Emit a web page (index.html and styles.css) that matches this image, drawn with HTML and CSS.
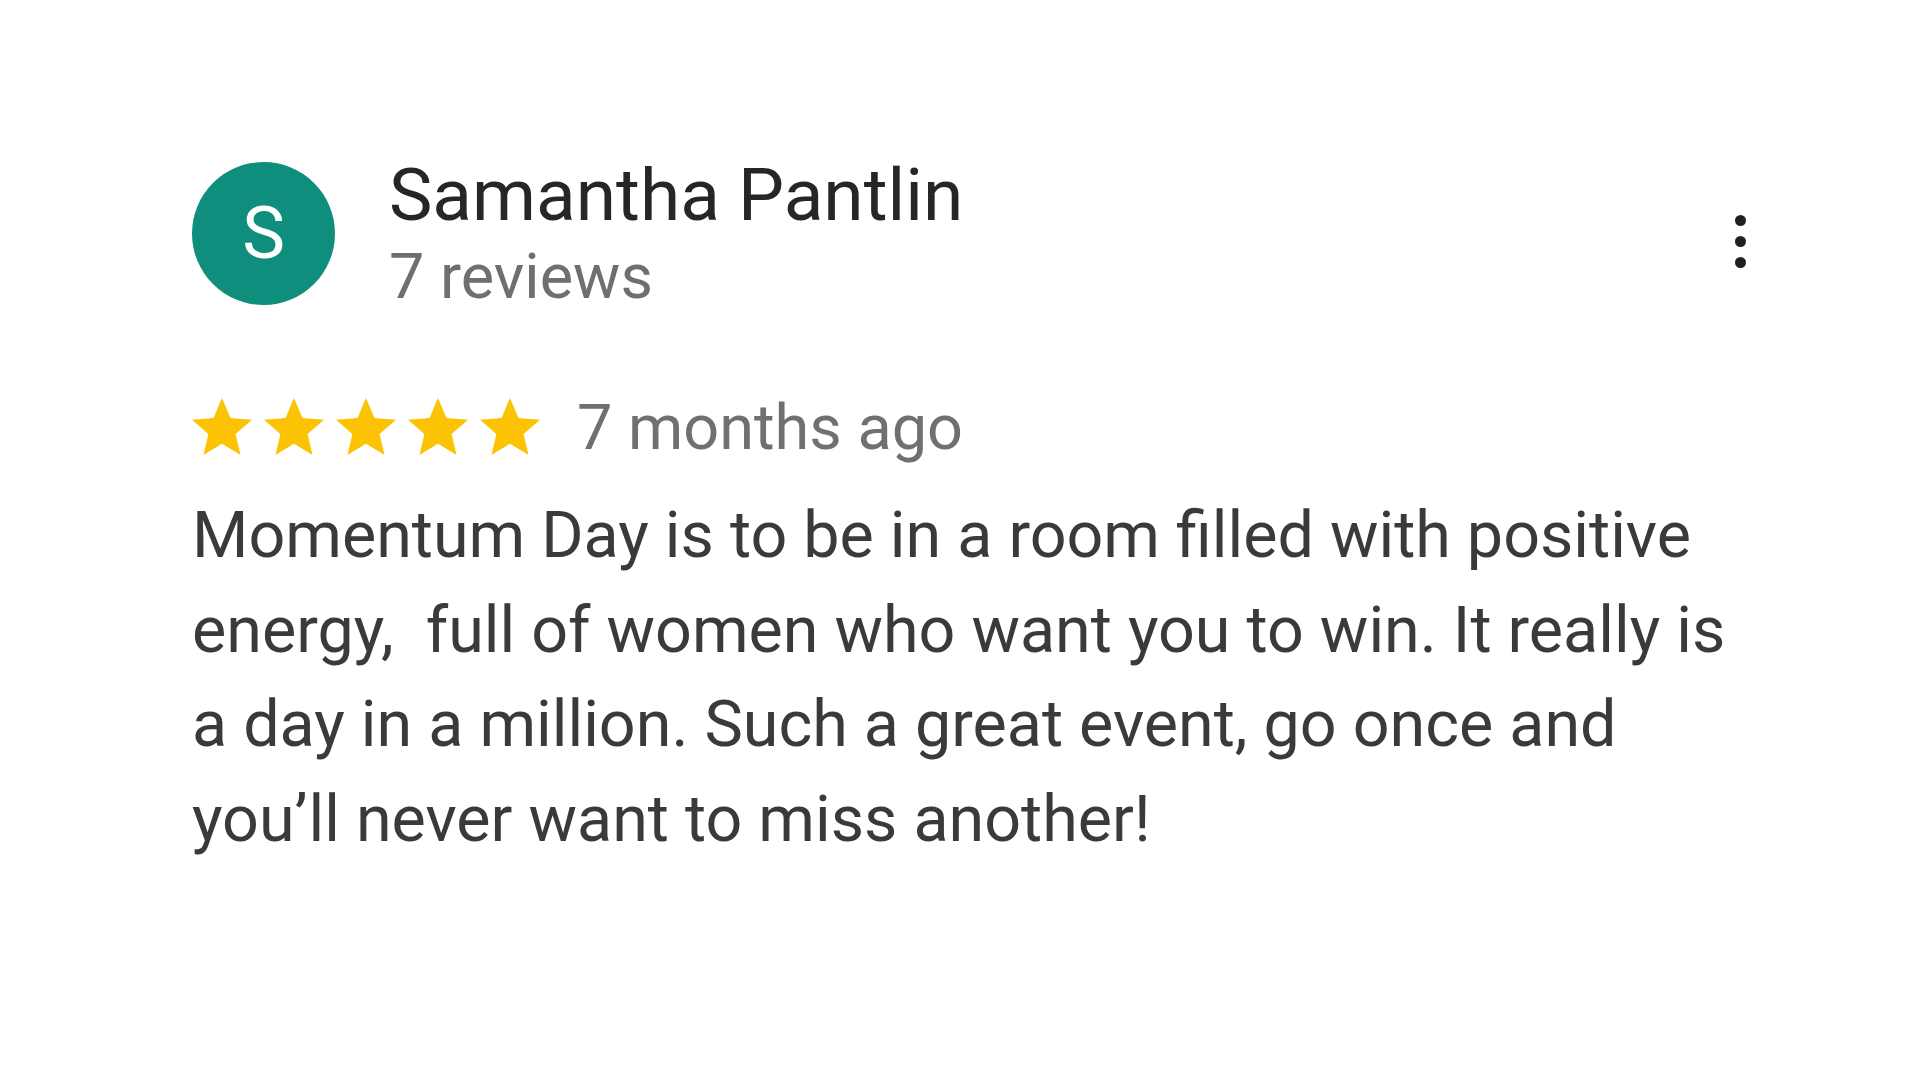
FILE: index.html
```html
<!DOCTYPE html>
<html lang="en">
<head>
<meta charset="utf-8">
<title>Review</title>
<link rel="stylesheet" href="styles.css">
</head>
<body>
<div class="review">
  <div class="header">
    <div class="avatar">S</div>
    <div class="who">
      <div class="name">Samantha Pantlin</div>
      <div class="count">7 reviews</div>
    </div>
    <div class="more" aria-label="More options">
      <span class="dot"></span><span class="dot"></span><span class="dot"></span>
    </div>
  </div>
  <div class="meta">
    <div class="stars">
      <svg viewBox="0 0 24 24"><path d="M12 17.27L18.18 21l-1.64-7.03L22 9.24l-7.19-.61L12 2 9.19 8.63 2 9.24l5.46 4.73L5.82 21z"/></svg>
      <svg viewBox="0 0 24 24"><path d="M12 17.27L18.18 21l-1.64-7.03L22 9.24l-7.19-.61L12 2 9.19 8.63 2 9.24l5.46 4.73L5.82 21z"/></svg>
      <svg viewBox="0 0 24 24"><path d="M12 17.27L18.18 21l-1.64-7.03L22 9.24l-7.19-.61L12 2 9.19 8.63 2 9.24l5.46 4.73L5.82 21z"/></svg>
      <svg viewBox="0 0 24 24"><path d="M12 17.27L18.18 21l-1.64-7.03L22 9.24l-7.19-.61L12 2 9.19 8.63 2 9.24l5.46 4.73L5.82 21z"/></svg>
      <svg viewBox="0 0 24 24"><path d="M12 17.27L18.18 21l-1.64-7.03L22 9.24l-7.19-.61L12 2 9.19 8.63 2 9.24l5.46 4.73L5.82 21z"/></svg>
    </div>
    <span class="date">7 months ago</span>
  </div>
  <p class="text">Momentum Day is to be in a room filled with positive energy,&nbsp; full of women who want you to win. It really is a day in a million. Such a great event, go once and you’ll never want to miss another!</p>
</div>
</body>
</html>
```
FILE: styles.css
```css
html, body {
  margin: 0;
  padding: 0;
  background: #ffffff;
}
body {
  font-family: Roboto, "Liberation Sans", Arial, sans-serif;
  width: 1920px;
  height: 1080px;
  overflow: hidden;
}
.review {
  width: 1556px;
  padding: 152px 0 0 192px;
}
.header {
  display: flex;
  align-items: center;
}
.avatar {
  width: 143px;
  height: 143px;
  border-radius: 50%;
  background: #0f8e7d;
  color: #ffffff;
  font-size: 72px;
  display: flex;
  align-items: center;
  justify-content: center;
  flex: none;
}
.who {
  margin-left: 54px;
  flex: 1;
}
.name {
  font-size: 73px;
  color: #262626;
  line-height: 87px;
}
.count {
  font-size: 63px;
  color: #6f6f6f;
  line-height: 75px;
}
.more {
  display: flex;
  flex-direction: column;
  align-items: center;
  gap: 10px;
  width: 20px;
  margin-right: -2px;
  margin-top: 16px;
}
.dot {
  width: 11px;
  height: 11px;
  border-radius: 50%;
  background: #202020;
}
.meta {
  display: flex;
  align-items: center;
  margin-top: 77px;
}
.stars {
  display: flex;
  margin-left: -6px;
}
.stars svg {
  width: 72px;
  height: 72px;
  fill: #fbc304;
  display: block;
}
.date {
  font-size: 63px;
  color: #707070;
  margin-left: 31px;
}
.text {
  margin: 24px 0 0 0;
  font-size: 64.6px;
  line-height: 94.5px;
  color: #3a3a3a;
}
```
